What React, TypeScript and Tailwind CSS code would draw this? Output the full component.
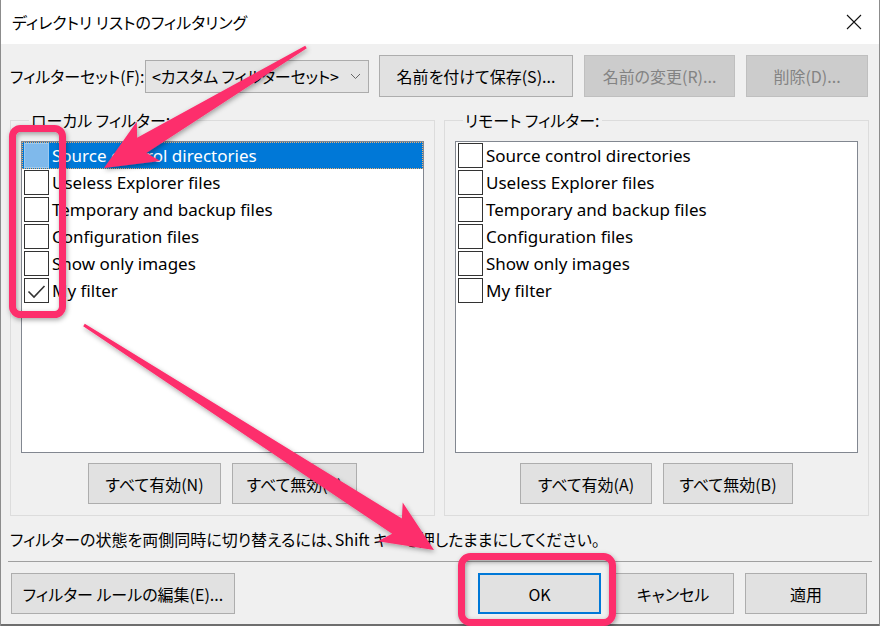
import React from 'react';

type Pt = [number, number];

const jp = "font-['Noto_Sans_CJK_JP',sans-serif] [font-feature-settings:'palt'] text-[16px] text-black whitespace-nowrap";
const en = "font-['Noto_Sans','Noto_Sans_CJK_JP',sans-serif] text-[17px] whitespace-nowrap";

const filters = [
  'Source control directories',
  'Useless Explorer files',
  'Temporary and backup files',
  'Configuration files',
  'Show only images',
  'My filter',
];

// tapered arrow: thin tail, wide shaft near the head, barbed head
function arrowPoints(t: Pt, p: Pt, head = 52, wing = 23, shaft = 9, tail = 1.5) {
  const dx = p[0] - t[0];
  const dy = p[1] - t[1];
  const len = Math.hypot(dx, dy);
  const ux = dx / len;
  const uy = dy / len;
  const nx = -uy;
  const ny = ux;
  const bx = p[0] - ux * head;
  const by = p[1] - uy * head;
  const jx = bx + ux * 8;
  const jy = by + uy * 8;
  const pts: Pt[] = [
    [t[0] + nx * tail, t[1] + ny * tail],
    [jx + nx * shaft, jy + ny * shaft],
    [bx + nx * wing, by + ny * wing],
    p,
    [bx - nx * wing, by - ny * wing],
    [jx - nx * shaft, jy - ny * shaft],
    [t[0] - nx * tail, t[1] - ny * tail],
  ];
  return pts.map(([x, y]) => `${x.toFixed(1)},${y.toFixed(1)}`).join(' ');
}

function Btn({
  children,
  className = '',
  disabled = false,
  primary = false,
}: {
  children: React.ReactNode;
  className?: string;
  disabled?: boolean;
  primary?: boolean;
}) {
  let look = 'bg-[#e1e1e1] border border-[#adadad]';
  if (disabled) look = 'bg-[#cccccc] border border-[#bfbfbf]';
  if (primary) look = 'bg-[#e1e1e1] border-2 border-[#0078d7]';
  return (
    <div className={`${jp} ${look} ${className} flex items-center justify-center shrink-0`}>
      <span className={disabled ? 'text-[#838383]' : 'text-black'}>{children}</span>
    </div>
  );
}

function Check() {
  return (
    <svg width="23" height="23" viewBox="0 0 23 23">
      <polyline points="3.5,12.5 9,18 19.5,7" fill="none" stroke="#333" strokeWidth="1.6" />
    </svg>
  );
}

function FilterList({ selected, checked }: { selected?: number; checked?: number }) {
  return (
    <div className="h-[312px] border border-[#828790] bg-white flex flex-col">
      {filters.map((f, i) => {
        const sel = i === selected;
        return (
          <div
            key={f}
            className={`h-[27px] flex items-center shrink-0 ${
              sel ? 'bg-[#0078d7] text-white border border-dotted border-[#f0b070]' : 'text-black border border-transparent'
            }`}
          >
            <div
              className={`w-[25px] h-[25px] ml-px shrink-0 flex items-center justify-center ${
                sel ? 'bg-[#7fb9eb] border border-[#9ccaf0]' : 'bg-white border border-[#333]'
              }`}
            >
              {i === checked && <Check />}
            </div>
            <span className={`${en} ml-[3px] leading-none`}>{f}</span>
          </div>
        );
      })}
    </div>
  );
}

function Group({
  title,
  children,
  buttons,
}: {
  title: string;
  children: React.ReactNode;
  buttons: React.ReactNode;
}) {
  return (
    <fieldset className="w-[425px] border border-[#dcdcdc] px-[10px] pb-[11px]">
      <legend className={`${jp} ml-[8px] px-[2px] leading-[24px]`}>{title}</legend>
      <div className="mt-[9px]">{children}</div>
      <div className="mt-[10px] flex justify-center gap-[11px]">{buttons}</div>
    </fieldset>
  );
}

export default function App() {
  const pink = '#fd2d6c';
  return (
    <div className="relative w-[880px] h-[626px] overflow-hidden bg-[#f0f0f0] border-x border-[#8c8c8c] flex flex-col">
      {/* title bar */}
      <div className="h-[44px] bg-white flex items-center justify-between pl-[11px] pr-[17px] shrink-0">
        <span className={jp}>ディレクトリ リストのフィルタリング</span>
        <svg width="16" height="16" viewBox="0 0 16 16">
          <path d="M1 1 L15 15 M15 1 L1 15" stroke="#111" strokeWidth="1.1" />
        </svg>
      </div>

      {/* filter set row */}
      <div className="mt-[11px] h-[42px] flex items-center pl-[9px] shrink-0">
        <span className={`${jp} w-[135px]`}>フィルターセット(F):</span>
        <div className="w-[224px] h-[33px] bg-[#e5e5e5] border border-[#acacac] flex items-center justify-between pl-[6px] pr-[7px]">
          <span className={`${jp} tracking-[-0.2px]`}>&lt;カスタム フィルターセット&gt;</span>
          <svg width="11" height="7" viewBox="0 0 11 7">
            <polyline points="1,1 5.5,5.5 10,1" fill="none" stroke="#666" strokeWidth="1" />
          </svg>
        </div>
        <Btn className="ml-[10px] w-[194px] h-[42px]">名前を付けて保存(S)...</Btn>
        <Btn disabled className="ml-[11px] w-[151px] h-[42px]">名前の変更(R)...</Btn>
        <Btn disabled className="ml-[11px] w-[122px] h-[42px]">削除(D)...</Btn>
      </div>

      {/* local / remote groups */}
      <div className="mt-[11px] flex gap-[9px] pl-[9px] shrink-0">
        <Group
          title="ローカル フィルター:"
          buttons={
            <>
              <Btn className="w-[133px] h-[41px]">すべて有効(N)</Btn>
              <Btn className="w-[125px] h-[41px]">すべて無効(V)</Btn>
            </>
          }
        >
          <FilterList selected={0} checked={5} />
        </Group>
        <Group
          title="リモート フィルター:"
          buttons={
            <>
              <Btn className="w-[132px] h-[41px]">すべて有効(A)</Btn>
              <Btn className="w-[130px] h-[41px]">すべて無効(B)</Btn>
            </>
          }
        >
          <FilterList />
        </Group>
      </div>

      <div className="h-[45px] flex items-center pl-[9px] shrink-0">
        <span className={jp}>フィルターの状態を両側同時に切り替えるには、Shift キーを押したままにしてください。</span>
      </div>
      <div className="mx-[7px] border-t border-[#a0a0a0] shrink-0" />

      {/* bottom buttons */}
      <div className="mt-[11px] flex pl-[10px] shrink-0">
        <Btn className="w-[224px] h-[41px]">フィルター ルールの編集(E)...</Btn>
        <Btn primary className="ml-[243px] w-[123px] h-[41px]">OK</Btn>
        <Btn className="ml-[11px] w-[122px] h-[41px]">キャンセル</Btn>
        <Btn className="ml-[11px] w-[122px] h-[41px]">適用</Btn>
      </div>
      <div className="mt-auto h-[2px] bg-[#6e6e6e] shrink-0" />

      {/* annotations */}
      <svg className="absolute inset-0 pointer-events-none" width="880" height="626" viewBox="0 0 880 626">
        <defs>
          <filter id="shade" x="-20%" y="-20%" width="140%" height="140%">
            <feDropShadow dx="1" dy="2" stdDeviation="2.5" floodColor="#000" floodOpacity="0.35" />
          </filter>
        </defs>
        <g filter="url(#shade)">
          <rect x="11.5" y="128.5" width="50" height="186" rx="8" fill="none" stroke={pink} strokeWidth="7" />
          <rect x="460.5" y="556.5" width="151" height="66" rx="9" fill="none" stroke={pink} strokeWidth="7" />
          <polygon points={arrowPoints([305, 47], [103, 168])} fill={pink} />
          <polygon points={arrowPoints([83, 325], [433, 550])} fill={pink} />
        </g>
      </svg>
    </div>
  );
}
